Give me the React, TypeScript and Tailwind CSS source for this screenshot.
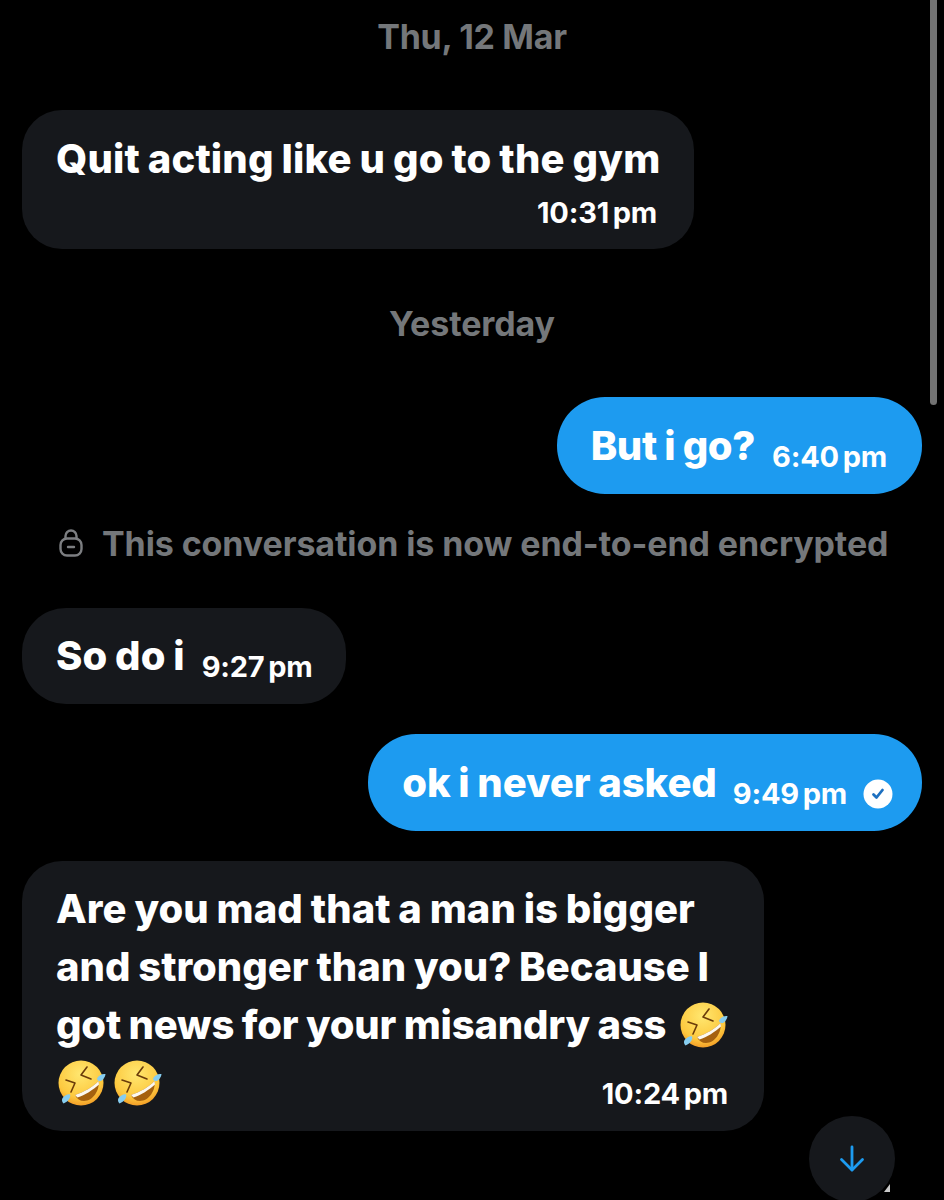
import React from 'react';

function RoflEmoji({ size = 50 }: { size?: number }) {
  return (
    <svg width={size} height={size} viewBox="0 0 50 50" className="shrink-0">
      <defs>
        <radialGradient id="rofl-face" cx="48%" cy="30%" r="76%">
          <stop offset="0%" stopColor="#ffe770" />
          <stop offset="68%" stopColor="#fdc93f" />
          <stop offset="100%" stopColor="#f0901f" />
        </radialGradient>
      </defs>
      <circle cx="25" cy="25" r="22.5" fill="url(#rofl-face)" />
      {/* mouth */}
      <path d="M19 37 C28 34 37 29 42.5 23 C44 32 37 43 28 43 C24 43 21 41 19 37 Z" fill="#a5610f" />
      <path d="M19 37 C28 34 37 29 42.5 23 L43 26.5 C37 32 29 37 21.5 39.5 Z" fill="#fbf8f1" />
      {/* eyes */}
      <path d="M31 9 L25 17 L35 21" fill="none" stroke="#6b3c0a" strokeWidth="1.6" strokeLinecap="round" strokeLinejoin="round" />
      <path d="M10 22 L19 25 L15 34" fill="none" stroke="#6b3c0a" strokeWidth="1.6" strokeLinecap="round" strokeLinejoin="round" />
      {/* tears */}
      <path d="M41 20.5 C43 17 46 15.5 49.5 16 C49 20 46 23.5 43.5 23 C42 23 41 21.5 41 20.5 Z" fill="#86cdf0" />
      <path d="M14 36.5 C15 39 13 43 7.5 45.5 C5.5 43.5 5.5 41 7 39.5 C9 37.5 12 35.5 14 36.5 Z" fill="#86cdf0" />
    </svg>
  );
}

function LockIcon() {
  return (
    <svg width="26" height="30" viewBox="0 0 26 30" fill="none" stroke="#7c7e81" strokeWidth="2.4">
      <path d="M7.5 11 V8 a5.5 5.5 0 0 1 11 0 V11" />
      <rect x="2.5" y="10.5" width="21" height="17" rx="6.5" />
      <path d="M10 19 H16" strokeLinecap="round" />
    </svg>
  );
}

function SentCheck() {
  return (
    <svg width="30" height="30" viewBox="0 0 30 30" className="shrink-0">
      <circle cx="15" cy="15" r="14.5" fill="#ffffff" />
      <path d="M10.5 15.5 L13.5 18.5 L19.5 11" fill="none" stroke="#1d70c0" strokeWidth="2.8" strokeLinecap="round" strokeLinejoin="round" />
    </svg>
  );
}

const sentCls = 'rounded-[48px] bg-[#1d9bf0] h-[97px] pl-[34px] flex items-center text-white';
const recvCls = 'rounded-[40px] bg-[#16181c] text-white';
const textCls = 'text-[40px] font-extrabold [word-spacing:-1px] leading-[58px] whitespace-nowrap';
const timeCls = 'text-[29px] font-bold tracking-[-0.2px] [word-spacing:-3px] whitespace-nowrap';

export default function App() {
  return (
    <div className="relative h-[1200px] w-[944px] overflow-hidden bg-black font-['Inter',sans-serif]">
      <div className="flex h-full flex-col px-[22px]">
        <div className="mt-[15px] h-[44px] text-center text-[34px] leading-[44px] font-bold tracking-[-0.3px] text-[#74777a]">
          Thu, 12 Mar
        </div>

        <div className={`${recvCls} mt-[51px] h-[139px] w-[672px] pt-[20px] pr-[37px] pl-[34px]`}>
          <div className={`${textCls} tracking-[0.15px]`}>Quit acting like u go to the gym</div>
          <div className={`${timeCls} mt-[7px] text-right leading-[36px]`}>10:31 pm</div>
        </div>

        <div className="mt-[53px] h-[44px] text-center text-[34px] leading-[44px] font-bold tracking-[-0.1px] text-[#74777a]">
          Yesterday
        </div>

        <div className="mt-[51px] flex justify-end">
          <div className={`${sentCls} gap-[17px] pr-[35px]`}>
            <span className={`${textCls} tracking-[-0.35px]`}>But i go?</span>
            <span className={`${timeCls} mt-[22px]`}>6:40 pm</span>
          </div>
        </div>

        <div className="mt-[27px] flex h-[44px] items-center gap-[18px] pl-[36px] text-[34px] font-bold tracking-[-0.1px] whitespace-nowrap text-[#74777a]">
          <LockIcon />
          <span>This conversation is now end-to-end encrypted</span>
        </div>

        <div className="mt-[43px] flex">
          <div className={`${recvCls} flex h-[96px] items-center gap-[17px] rounded-[44px] pr-[33px] pl-[34px]`}>
            <span className={`${textCls} tracking-[0.05px]`}>So do i</span>
            <span className={`${timeCls} mt-[22px]`}>9:27 pm</span>
          </div>
        </div>

        <div className="mt-[30px] flex justify-end">
          <div className={`${sentCls} gap-[16px] pr-[29px]`}>
            <span className={`${textCls} tracking-[-0.05px]`}>ok i never asked</span>
            <span className={`${timeCls} mt-[22px]`}>9:49 pm</span>
            <span className="mt-[22px]"><SentCheck /></span>
          </div>
        </div>

        <div className={`${recvCls} mt-[30px] h-[270px] w-[742px] pt-[19px] pr-[36px] pl-[34px]`}>
          <div className={`${textCls} tracking-[0.05px]`}>Are you mad that a man is bigger</div>
          <div className={`${textCls} tracking-[0px]`}>and stronger than you? Because I</div>
          <div className={`${textCls} flex items-center gap-[12px] tracking-[-0.2px]`}>
            <span>got news for your misandry ass</span>
            <RoflEmoji />
          </div>
          <div className="flex h-[58px] items-center">
            <RoflEmoji />
            <span className="ml-[6px]"><RoflEmoji /></span>
            <span className={`${timeCls} mt-[22px] ml-auto`}>10:24 pm</span>
          </div>
        </div>
      </div>

      {/* scroll indicator */}
      <div className="absolute top-0 left-[930px] h-[405px] w-[7px] rounded-b-full bg-[#737373]" />

      {/* jump to latest */}
      <div className="absolute top-[1116px] left-[809px] flex h-[86px] w-[86px] items-center justify-center rounded-full bg-[#16181c]">
        <svg width="26" height="30" viewBox="0 0 26 30" fill="none" stroke="#1d9bf0" strokeWidth="2.8" strokeLinecap="round" strokeLinejoin="round">
          <path d="M13 3 V26" />
          <path d="M2.5 15.5 L13 26 L23.5 15.5" />
        </svg>
      </div>
      <div className="absolute top-[1184px] left-[884px] h-[0] w-[0] border-b-[8px] border-l-[6px] border-b-[#c9c9c9] border-l-transparent" />
    </div>
  );
}
